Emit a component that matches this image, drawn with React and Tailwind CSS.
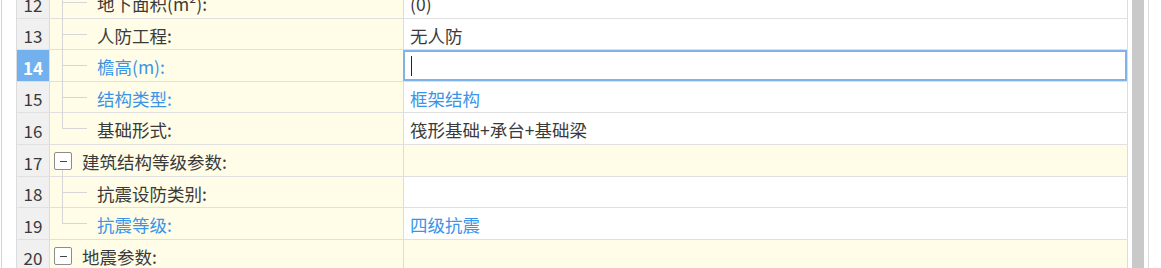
import React from 'react';

// Property grid rows (tree of parameters)
const rows = [
  { n: 12, h: 'h-[32px]', label: '地下面积(m²):', value: '(0)', line: 'full' },
  { n: 13, h: 'h-[31px]', label: '人防工程:', value: '无人防', line: 'full' },
  { n: 14, h: 'h-[32px]', label: '檐高(m):', value: '', blue: true, focus: true, line: 'full' },
  { n: 15, h: 'h-[31px]', label: '结构类型:', value: '框架结构', blue: true, line: 'full' },
  { n: 16, h: 'h-[32px]', label: '基础形式:', value: '筏形基础+承台+基础梁', line: 'end' },
  { n: 17, h: 'h-[32px]', label: '建筑结构等级参数:', group: true, open: true },
  { n: 18, h: 'h-[31px]', label: '抗震设防类别:', value: '', line: 'full' },
  { n: 19, h: 'h-[32px]', label: '抗震等级:', value: '四级抗震', blue: true, line: 'end' },
  { n: 20, h: 'h-[32px]', label: '地震参数:', group: true, open: true },
];

const font = { fontFamily: '"Segoe UI", "Noto Sans CJK SC", "Noto Sans", sans-serif' };

const Row = ({ r }) => {
  const text = r.blue ? 'text-[#3a95e8]' : 'text-[#3a3a3a]';
  return (
    <div className={`flex border-b border-[#e0e0e0] ${r.h}`}>
      {/* Số dòng */}
      <div
        className={`w-[33px] shrink-0 border-r border-[#dcdcdc] flex items-center justify-center pt-[4px] text-[17px]
          ${r.focus ? 'bg-[#72b1ee] text-white font-bold' : 'bg-[#f0f0f0] text-[#3a3a3a]'}`}
      >
        {r.n}
      </div>

      {/* Cột tên (tree) */}
      <div className="relative w-[354px] shrink-0 border-r border-[#dcdcdc] bg-[#fffde7] flex items-center pt-[4px]">
        {r.group ? (
          <>
            <span className="absolute left-[4px] top-[7px] w-[18px] h-[18px] border border-[#8c8c8c] rounded-[2px] bg-white flex items-center justify-center">
              <span className="w-[7px] h-[1px] bg-[#444]" />
            </span>
            {r.open && r.n === 17 && (
              <span className="absolute left-[12px] top-[25px] bottom-[-1px] w-[1px] bg-[#d6d6d6]" />
            )}
            <span className="ml-[32px] text-[17.5px] text-[#3a3a3a]">{r.label}</span>
          </>
        ) : (
          <>
            <span
              className={`absolute left-[12px] top-0 w-[1px] bg-[#d6d6d6] ${r.line === 'end' ? 'h-[16px]' : 'bottom-[-1px]'}`}
            />
            <span className="absolute left-[12px] top-[15px] w-[25px] h-[1px] bg-[#d6d6d6]" />
            <span className={`ml-[47px] text-[17.5px] ${text}`}>{r.label}</span>
          </>
        )}
      </div>

      {/* Cột giá trị */}
      <div
        className={`relative w-[724px] shrink-0 border-r border-[#dcdcdc] flex items-center pl-[6px] pt-[4px] text-[17.5px] ${text}
          ${r.group ? 'bg-[#fffde7]' : 'bg-white'}`}
      >
        {r.value}
        {r.focus && (
          <>
            <span className="absolute left-[-1px] top-0 right-0 bottom-0 border-2 border-[#7db3ea]" />
            <span className="absolute left-[7px] top-[6px] w-[1px] h-[20px] bg-[#222]" />
          </>
        )}
      </div>
    </div>
  );
};

export default function App() {
  return (
    <div className="w-[1161px] h-[268px] overflow-hidden bg-white flex" style={font}>
      {/* Lề trái */}
      <div className="w-[16px] shrink-0 flex">
        <div className="ml-[1px] w-[1px] h-full bg-[#d4d4d4]" />
      </div>

      {/* Bảng */}
      <div className="w-[1112px] shrink-0 border-l border-[#dcdcdc] -mt-[13px]">
        {rows.map((r) => (
          <Row key={r.n} r={r} />
        ))}
      </div>

      {/* Scrollbar */}
      <div className="w-[4px] shrink-0" />
      <div className="w-[12px] shrink-0 h-full bg-[#c9c9c9]" />
      <div className="w-[4px] shrink-0" />
      <div className="w-[1px] shrink-0 h-full bg-[#dcdcdc]" />
      <div className="flex-1" />
    </div>
  );
}
